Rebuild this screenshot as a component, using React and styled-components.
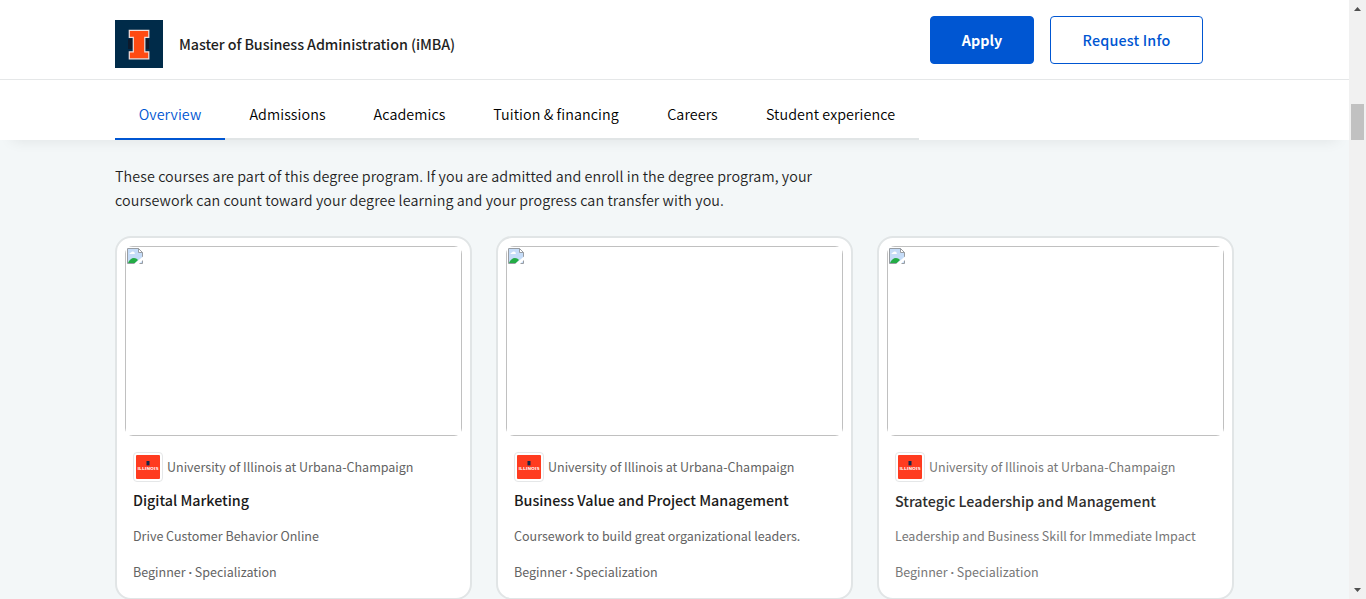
import React from "react";
import styled, { createGlobalStyle } from "styled-components";

const GlobalStyle = createGlobalStyle`
  *, *::before, *::after { box-sizing: border-box; }
  body {
    margin: 0;
    background: #f3f7f8;
    color: #1f1f1f;
    font-family: "Noto Sans CJK SC", "Noto Sans CJK JP", "Noto Sans", sans-serif;
    font-size: 14.32px;
    overflow: hidden;
  }
  h1, h3, p { margin: 0; }
`;

const Window = styled.div`
  display: flex;
  width: 1366px;
  height: 599px;
  overflow: hidden;
`;

const Page = styled.div`
  width: 1349px;
  height: 599px;
  overflow: hidden;
`;

const Sticky = styled.div`
  position: relative;
  z-index: 1;
  height: 140px;
  background: #fff;
  box-shadow: 0 12px 14px -12px rgba(0, 0, 0, 0.09);
`;

const Header = styled.header`
  display: flex;
  height: 80px;
  padding: 0 146px 0 115px;
  border-bottom: 1px solid #e5e7e8;
`;

const Logo = styled.svg`
  display: block;
  width: 48px;
  height: 48px;
  margin-top: 20px;
`;

const ProgramName = styled.h1`
  flex: 1;
  margin: 32px 0 0 16px;
  font-size: 14.32px;
  font-weight: 500;
  letter-spacing: -0.08px;
  line-height: 24px;
`;

const Actions = styled.div`
  display: flex;
  gap: 16px;
  padding-top: 16px;
`;

const Button = styled.button`
  width: ${(p) => p.$width}px;
  height: 48px;
  padding: 0;
  border: 1px solid #0056d2;
  border-radius: 4px;
  background: ${(p) => (p.$primary ? "#0056d2" : "#fff")};
  color: ${(p) => (p.$primary ? "#fff" : "#0056d2")};
  font-family: inherit;
  font-size: 14.32px;
  font-weight: ${(p) => (p.$primary ? 700 : 500)};
  letter-spacing: ${(p) => (p.$primary ? 0 : 0.17)}px;
  line-height: 24px;
`;

const Tabs = styled.nav`
  display: flex;
  width: 804px;
  height: 60px;
  margin-left: 115px;
`;

const Tab = styled.a`
  width: ${(p) => p.$width}px;
  padding-top: 22px;
  border-bottom: 2px solid ${(p) => (p.$active ? "#0056d2" : "#e1e5e6")};
  color: ${(p) => (p.$active ? "#0056d2" : "#000")};
  font-size: 14.32px;
  font-weight: 350;
  letter-spacing: 0.08px;
  line-height: 24px;
  text-align: center;
  white-space: nowrap;
`;

const Main = styled.main`
  padding: 24px 0 0 115px;
`;

const Intro = styled.p`
  width: 720px;
  font-weight: 350;
  letter-spacing: 0.08px;
  line-height: 24px;
`;

const Cards = styled.div`
  display: grid;
  grid-template-columns: repeat(3, 357px);
  gap: 24px;
  margin-top: 24px;
`;

const Card = styled.article`
  height: 364px;
  padding: 8px;
  border: 2px solid #e1e5e6;
  border-radius: 16px;
  background: #fff;
`;

const Cover = styled.div`
  height: 190px;
  border-radius: 8px;
  overflow: hidden;
`;

const CoverFrame = styled.div`
  height: 100%;
  padding: 1px;
  border: 1px solid #c0c0c0;
`;

const BrokenImage = styled.svg`
  display: block;
  width: 16px;
  height: 16px;
`;

const CardBody = styled.div`
  padding: 16px 8px 0;
`;

const Partner = styled.div`
  display: flex;
  align-items: center;
  gap: 4px;
  height: 30px;
`;

const PartnerLogo = styled.span`
  width: 30px;
  height: 30px;
  padding: 2px;
  border: 1px solid #e5e7e8;
  border-radius: 4px;
  svg { display: block; }
`;

const Small = styled.p`
  margin-top: ${(p) => p.$top || 0}px;
  color: ${(p) => (p.$faded ? "#777" : "#636363")};
  font-size: 12.53px;
  line-height: 20px;
  white-space: nowrap;
`;

const Dot = styled.span`
  font-family: "Open Sans", sans-serif;
  font-weight: 700;
  line-height: 1;
`;

const CardTitle = styled.h3`
  margin: ${(p) => (p.$faded ? "9px 0 -1px" : "8px 0 0")};
  color: ${(p) => (p.$faded ? "#2e2e2e" : "#1a1a1a")};
  font-size: 14.32px;
  font-weight: 500;
  letter-spacing: -0.02px;
  line-height: 20px;
  white-space: nowrap;
`;

const Scrollbar = styled.div`
  display: flex;
  flex-direction: column;
  justify-content: space-between;
  position: relative;
  width: 17px;
  height: 599px;
  background: #f1f1f1;
  svg { display: block; }
`;

const Thumb = styled.div`
  position: absolute;
  top: 104px;
  left: 2px;
  width: 13px;
  height: 36px;
  background: #c1c1c1;
`;

const tabs = [
  ["Overview", 110],
  ["Admissions", 125],
  ["Academics", 119],
  ["Tuition & financing", 174],
  ["Careers", 99],
  ["Student experience", 177],
];

const courses = [
  ["Digital Marketing", "Drive Customer Behavior Online"],
  ["Business Value and Project Management", "Coursework to build great organizational leaders."],
  ["Strategic Leadership and Management", "Leadership and Business Skill for Immediate Impact"],
];

function BlockI() {
  return (
    <Logo viewBox="0 0 48 48">
      <rect width="48" height="48" fill="#002b49" />
      <path d="M13 19h4.500v10H13zM31 19h3v10h-3z" fill="#0d1a2c" />
      <path d="M14.300 10.300h19.500v7h-4v14.500h4v7H14.300v-7h4V17.300h-4z" fill="#ff4a12" stroke="#f3dfdc" strokeWidth="1.200" />
    </Logo>
  );
}

function Broken() {
  return (
    <BrokenImage viewBox="0 0 16 16">
      <path d="M.5.5h11l4 4v11H.5z" fill="#c5dcf8" />
      <path d="M2.500 6a1.500 1.500 0 0 1 1.500-1.500 2 2 0 0 1 3.500 0 1 1 0 0 1 0 1.500z" fill="#fff" />
      <path d="M1 15c1-3 3.500-5 6-5 1.500 0 3 .8 4 2l-3 3z" fill="#23ac45" />
      <path d="M.5.5h11l4 4v11H.5z" fill="none" stroke="#989da3" />
      <path d="M11.500.5v4h4z" fill="#fff" stroke="#989da3" />
      <path d="M16 8.500v3.500L12 16H7z" fill="#fff" />
    </BrokenImage>
  );
}

function Illinois() {
  return (
    <PartnerLogo>
      <svg width="24" height="24" viewBox="0 0 24 24">
        <rect width="24" height="24" rx="1" fill="#ff3b1f" />
        <path d="M10.500 6h3v4.400h-3z" fill="#13294b" />
        <text x="1.500" y="15.200" textLength="21" lengthAdjust="spacingAndGlyphs" fontSize="4" fontWeight="700" fill="#fff">
          ILLINOIS
        </text>
      </svg>
    </PartnerLogo>
  );
}

export default function App() {
  return (
    <Window>
      <GlobalStyle />
      <Page>
        <Sticky>
          <Header>
            <BlockI />
            <ProgramName>Master of Business Administration (iMBA)</ProgramName>
            <Actions>
              <Button $primary $width={104}>Apply</Button>
              <Button $width={153}>Request Info</Button>
            </Actions>
          </Header>
          <Tabs>
            {tabs.map(([label, width], i) => (
              <Tab key={label} $width={width} $active={i === 0}>{label}</Tab>
            ))}
          </Tabs>
        </Sticky>
        <Main>
          <Intro>
            These courses are part of this degree program. If you are admitted and enroll in the degree program, your
            coursework can count toward your degree learning and your progress can transfer with you.
          </Intro>
          <Cards>
            {courses.map(([title, text], i) => (
              <Card key={title}>
                <Cover>
                  <CoverFrame><Broken /></CoverFrame>
                </Cover>
                <CardBody>
                  <Partner>
                    <Illinois />
                    <Small $faded={i === 2}>University of Illinois at Urbana-Champaign</Small>
                  </Partner>
                  <CardTitle $faded={i === 2}>{title}</CardTitle>
                  <Small $faded={i === 2} $top={16}>{text}</Small>
                  <Small $faded={i === 2} $top={16}>Beginner <Dot>·</Dot> Specialization</Small>
                </CardBody>
              </Card>
            ))}
          </Cards>
        </Main>
      </Page>
      <Scrollbar>
        <svg width="17" height="17"><path d="M5 11h7L8.500 7z" fill="#505050" /></svg>
        <Thumb />
        <svg width="17" height="17"><path d="M5 6h7L8.500 10z" fill="#505050" /></svg>
      </Scrollbar>
    </Window>
  );
}
